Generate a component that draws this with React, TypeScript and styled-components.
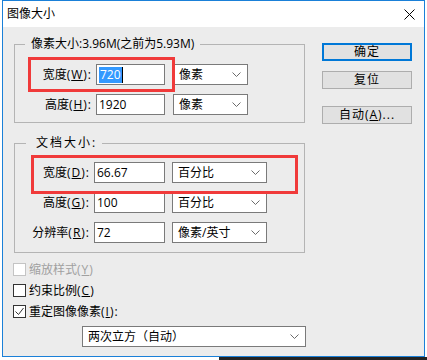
import React from "react";
import styled, { createGlobalStyle } from "styled-components";

const GlobalStyle = createGlobalStyle`
  html, body { margin: 0; padding: 0; background: #ffffff; }
  body {
    font-family: "Open Sans", "Noto Sans CJK SC", "Microsoft YaHei", sans-serif;
    font-size: 12px;
    color: #000;
  }
`;

const Page = styled.div`
  width: 427px;
  height: 360px;
  display: flex;
  flex-direction: column;
  overflow: hidden;
  background: #ffffff;
`;

const WindowRow = styled.div`
  display: flex;
  padding-left: 2px;
  height: 357px;
`;

const Window = styled.div`
  width: 423px;
  height: 357px;
  box-sizing: border-box;
  border: 1px solid #1a80d8;
  display: flex;
  flex-direction: column;
  background: #ececec;
`;

const TitleBar = styled.div`
  height: 26px;
  flex: none;
  background: #ffffff;
  display: flex;
  align-items: center;
  justify-content: space-between;
  padding: 0 9px 0 4px;
  line-height: 16px;
`;

const Body = styled.div`
  flex: 1;
  display: flex;
  padding: 16px 0 0 10px;
`;

const LeftCol = styled.div`
  width: 292px;
  display: flex;
  flex-direction: column;
`;

const RightCol = styled.div`
  margin-left: 17px;
  display: flex;
  flex-direction: column;
`;

const GroupBox = styled.div<{ $mt: number; $pt: number; $pb: number }>`
  position: relative;
  margin: ${(p) => p.$mt}px 0 0 1px;
  width: 291px;
  box-sizing: border-box;
  border: 1px solid #b4b4b4;
  padding: ${(p) => p.$pt}px 0 ${(p) => p.$pb}px 0;
  display: flex;
  flex-direction: column;
  gap: 9px;
`;

const Legend = styled.div<{ $left: number; $pl: number; $pr: number; $ls: number }>`
  position: absolute;
  top: -9px;
  left: ${(p) => p.$left}px;
  padding: 0 ${(p) => p.$pr}px 0 ${(p) => p.$pl}px;
  background: #ececec;
  line-height: 16px;
  letter-spacing: ${(p) => p.$ls}px;
  white-space: nowrap;
`;

const Highlight = styled.div<{ $left: number; $top: number; $w: number; $h: number }>`
  position: absolute;
  left: ${(p) => p.$left}px;
  top: ${(p) => p.$top}px;
  width: ${(p) => p.$w}px;
  height: ${(p) => p.$h}px;
  box-sizing: border-box;
  border: 3px solid #f03a3a;
  pointer-events: none;
`;

const Row = styled.div<{ $labelW: number; $inputW: number; $selW: number; $gap2: number }>`
  display: grid;
  grid-template-columns: ${(p) => p.$labelW}px ${(p) => p.$inputW}px ${(p) => p.$selW}px;
  align-items: center;
  height: 21px;

  & > :nth-child(2) { margin-left: 4px; }
  & > :nth-child(3) { margin-left: ${(p) => p.$gap2}px; }
`;

const Label = styled.div`
  text-align: right;
  white-space: nowrap;
  line-height: 16px;
`;

const Accel = styled.span`
  letter-spacing: 1px;
`;

const Field = styled.div`
  height: 21px;
  box-sizing: border-box;
  border: 1px solid #7a7a7a;
  background: #ffffff;
  display: flex;
  align-items: center;
  padding-left: 2px;
  line-height: 16px;
`;

const Selected = styled.span`
  background: #3399ff;
  color: #ffffff;
  border-right: 1px solid #000;
  padding: 0 1px;
  line-height: 16px;
`;

const Select = styled.div`
  height: 21px;
  box-sizing: border-box;
  border: 1px solid #7a7a7a;
  background: #ffffff;
  display: flex;
  align-items: center;
  justify-content: space-between;
  padding: 0 6px 0 5px;
  line-height: 16px;
  white-space: nowrap;
`;

const BottomSelect = styled(Select)`
  margin: 4px 0 0 69px;
  width: 224px;
`;

const Button = styled.div<{ $primary?: boolean; $mt: number }>`
  width: 90px;
  height: 18px;
  margin-top: ${(p) => p.$mt}px;
  box-sizing: border-box;
  background: #e1e1e1;
  border: ${(p) => (p.$primary ? "2px solid #0078d7" : "1px solid #adadad")};
  display: flex;
  align-items: center;
  justify-content: center;
  line-height: 14px;
  letter-spacing: 1px;
`;

const CheckList = styled.div`
  margin-top: 6px;
  display: flex;
  flex-direction: column;
`;

const CheckRow = styled.div<{ $disabled?: boolean }>`
  height: 21px;
  display: flex;
  align-items: center;
  gap: 3px;
  color: ${(p) => (p.$disabled ? "#a0a0a0" : "#000")};
  line-height: 16px;
`;

const Box = styled.div<{ $disabled?: boolean }>`
  width: 13px;
  height: 13px;
  box-sizing: border-box;
  border: 1px solid ${(p) => (p.$disabled ? "#c4c4c4" : "#333333")};
  background: #ffffff;
  display: flex;
  align-items: center;
  justify-content: center;
`;

const Strip = styled.div`
  height: 3px;
  display: flex;
`;

const StripLight = styled.div`
  width: 219px;
  background: #ffffff;
`;

const StripDark = styled.div`
  flex: 1;
  background: #232323;
`;

const Chevron = () => (
  <svg width="9" height="5" viewBox="0 0 9 5">
    <polyline points="0.5,0.5 4.5,4.5 8.5,0.5" fill="none" stroke="#6b6b6b" strokeWidth="1" />
  </svg>
);

const CloseIcon = () => (
  <svg width="11" height="11" viewBox="0 0 11 11">
    <line x1="0.5" y1="0.5" x2="10.5" y2="10.5" stroke="#000" strokeWidth="1" />
    <line x1="10.5" y1="0.5" x2="0.5" y2="10.5" stroke="#000" strokeWidth="1" />
  </svg>
);

const Check = () => (
  <svg width="11" height="11" viewBox="0 0 11 11">
    <polyline points="1.5,5.5 4.5,8.5 9.5,2" fill="none" stroke="#333" strokeWidth="1" />
  </svg>
);

const Acc = ({ k, colon }: { k: string; colon?: boolean }) => (
  <Accel>
    (<u>{k}</u>){colon ? ":" : ""}
  </Accel>
);

export default function App() {
  return (
    <Page>
      <GlobalStyle />
      <WindowRow>
        <Window>
          <TitleBar>
            <span>图像大小</span>
            <CloseIcon />
          </TitleBar>
          <Body>
            <LeftCol>
              <GroupBox $mt={1} $pt={19} $pb={7}>
                <Legend $left={10} $pl={6} $pr={6} $ls={0}>
                  像素大小:3.96M(之前为5.93M)
                </Legend>
                <Highlight $left={13} $top={12} $w={147} $h={35} />
                <Row $labelW={77} $inputW={73} $selW={83} $gap2={8}>
                  <Label>
                    宽度<Acc k="W" colon />
                  </Label>
                  <Field>
                    <Selected>720</Selected>
                  </Field>
                  <Select>
                    <span>像素</span>
                    <Chevron />
                  </Select>
                </Row>
                <Row $labelW={77} $inputW={73} $selW={83} $gap2={8}>
                  <Label>
                    高度<Acc k="H" colon />
                  </Label>
                  <Field>1920</Field>
                  <Select>
                    <span>像素</span>
                    <Chevron />
                  </Select>
                </Row>
              </GroupBox>

              <GroupBox $mt={20} $pt={18} $pb={9}>
                <Legend $left={11} $pl={10} $pr={5} $ls={2}>
                  文档大小:
                </Legend>
                <Highlight $left={16} $top={11} $w={267} $h={39} />
                <Row $labelW={75} $inputW={75} $selW={102} $gap2={7}>
                  <Label>
                    宽度<Acc k="D" colon />
                  </Label>
                  <Field>66.67</Field>
                  <Select>
                    <span>百分比</span>
                    <Chevron />
                  </Select>
                </Row>
                <Row $labelW={75} $inputW={75} $selW={102} $gap2={7}>
                  <Label>
                    高度<Acc k="G" colon />
                  </Label>
                  <Field>100</Field>
                  <Select>
                    <span>百分比</span>
                    <Chevron />
                  </Select>
                </Row>
                <Row $labelW={75} $inputW={75} $selW={102} $gap2={7}>
                  <Label>
                    分辨率<Acc k="R" colon />
                  </Label>
                  <Field>72</Field>
                  <Select>
                    <span>像素/英寸</span>
                    <Chevron />
                  </Select>
                </Row>
              </GroupBox>

              <CheckList>
                <CheckRow $disabled>
                  <Box $disabled />
                  <span>
                    缩放样式<Acc k="Y" />
                  </span>
                </CheckRow>
                <CheckRow>
                  <Box />
                  <span>
                    约束比例<Acc k="C" />
                  </span>
                </CheckRow>
                <CheckRow>
                  <Box>
                    <Check />
                  </Box>
                  <span>
                    重定图像像素<Acc k="I" colon />
                  </span>
                </CheckRow>
              </CheckList>

              <BottomSelect>
                <span>两次立方（自动）</span>
                <Chevron />
              </BottomSelect>
            </LeftCol>

            <RightCol>
              <Button $primary $mt={0}>确定</Button>
              <Button $mt={10}>复位</Button>
              <Button $mt={17}>
                自动<Acc k="A" />...
              </Button>
            </RightCol>
          </Body>
        </Window>
      </WindowRow>
      <Strip>
        <StripLight />
        <StripDark />
      </Strip>
    </Page>
  );
}
